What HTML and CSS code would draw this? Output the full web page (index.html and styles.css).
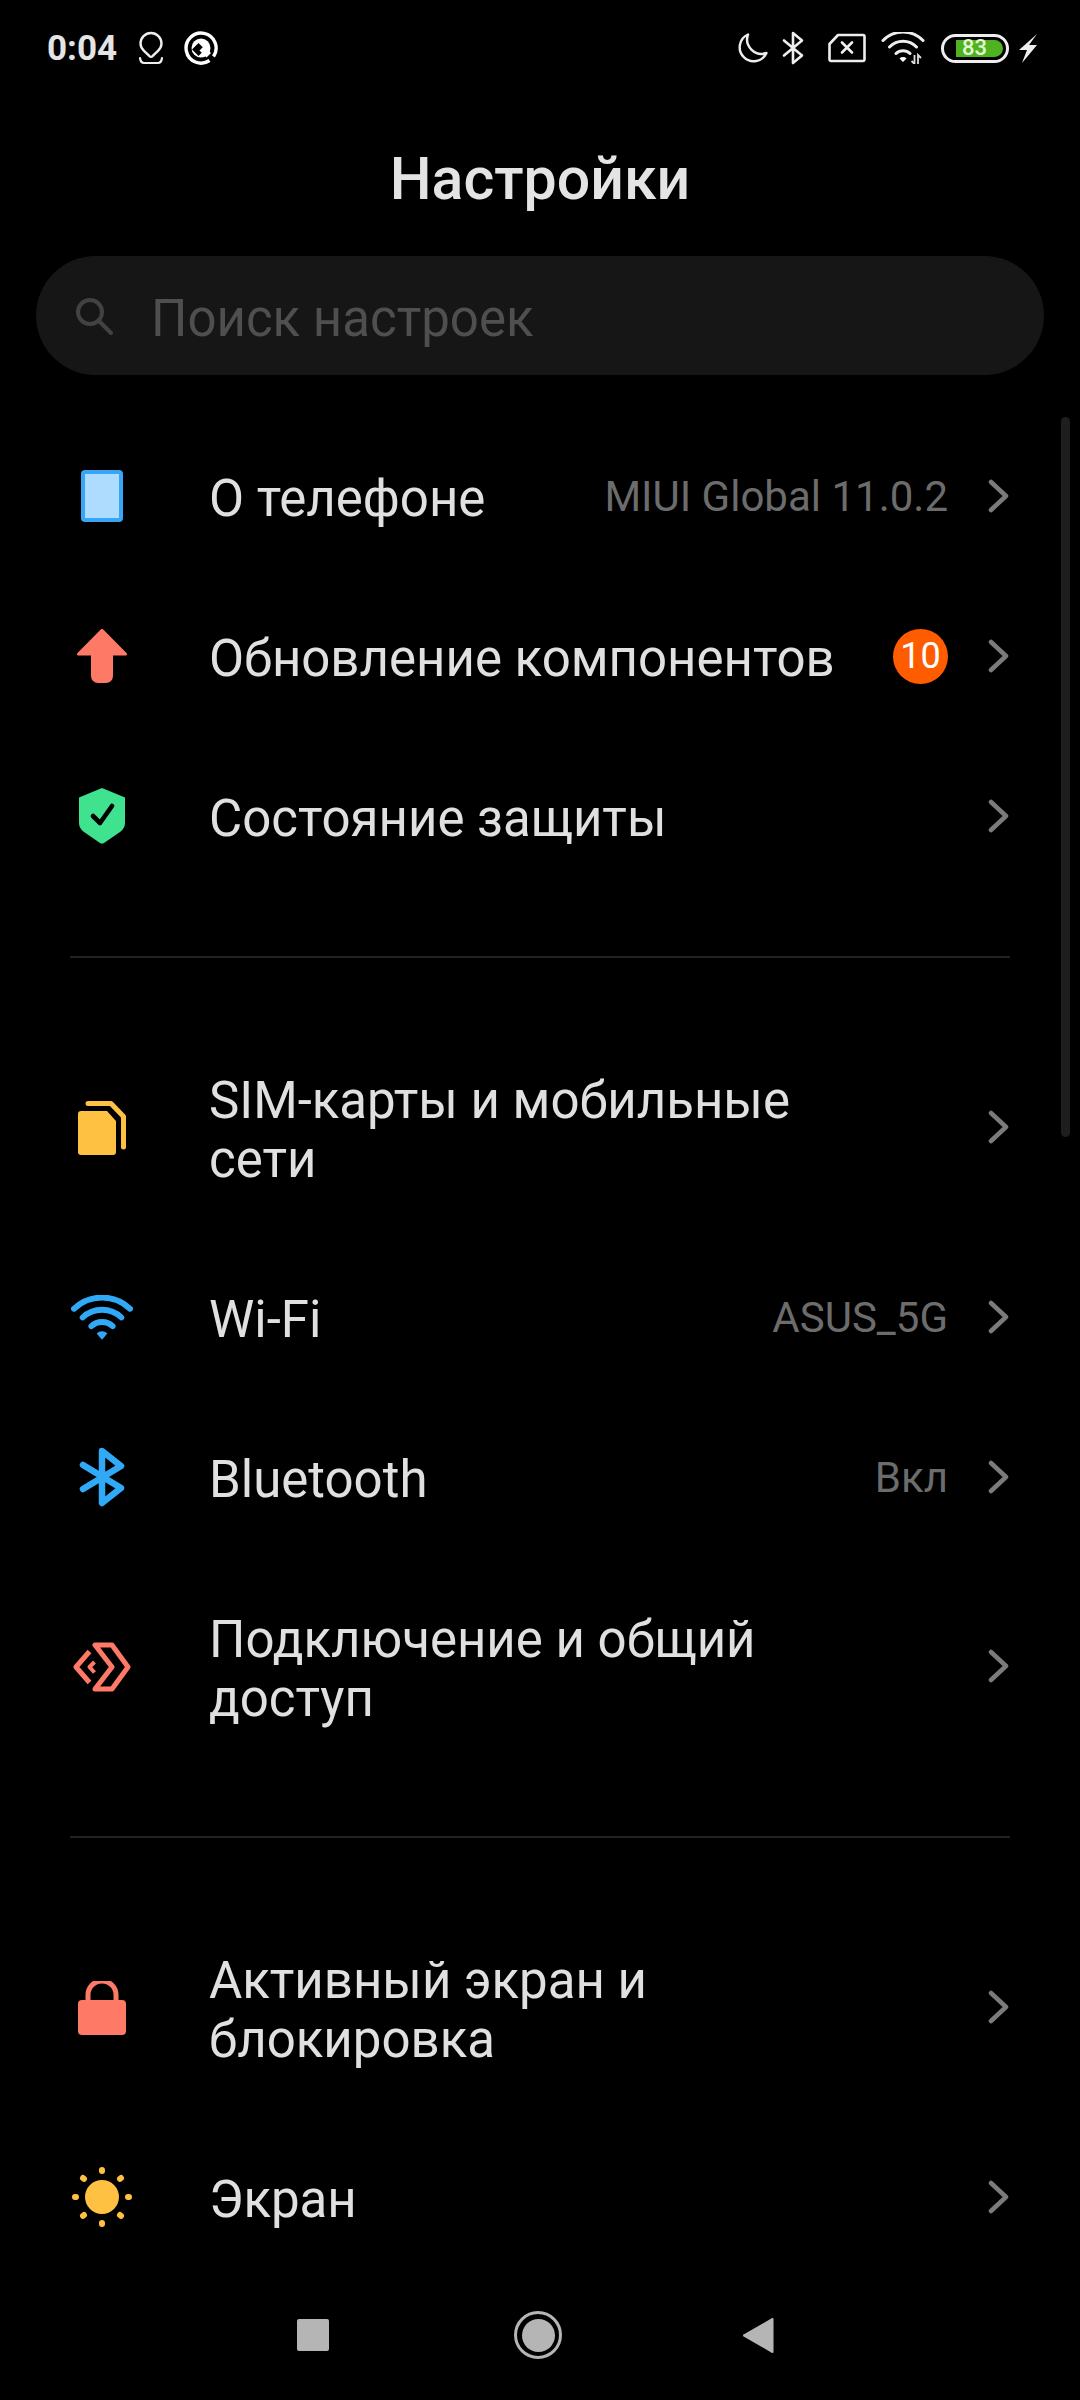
FILE: index.html
```html
<!DOCTYPE html>
<html lang="ru">
<head>
<meta charset="utf-8">
<title>Настройки</title>
<link rel="stylesheet" href="styles.css">
</head>
<body>
<div class="screen">
  <header class="status">
    <div class="status-left">
      <span class="time">0:04</span>
      <svg class="si-loc" viewBox="0 0 26 34" width="26" height="34"><path d="M13 2a10.500 10.500 0 0 1 10.500 10.500c0 3-1.500 5.300-3.500 7.300l-5.500 5.400a2 2 0 0 1-3 0L6 19.800c-2-2-3.500-4.300-3.500-7.300A10.500 10.500 0 0 1 13 2z" fill="none" stroke="#eee" stroke-width="2.400"/><path d="M2 27c.4 3 1.500 5 4 5h14c2.500 0 3.600-2 4-5" fill="none" stroke="#eee" stroke-width="2.200" stroke-linecap="round"/></svg>
      <svg class="si-q" viewBox="0 0 34 34" width="34" height="34"><path d="M25.500 29.500A15 15 0 1 1 29.500 25.500" fill="none" stroke="#fff" stroke-width="3.400"/><circle cx="17" cy="17" r="9.500" fill="#fff"/><path d="M8 18.500 14.500 12 21 18.500 14.500 25z" fill="#000"/><path d="M15.500 19.500 20 15l7 7-4.500 4.500z" fill="#fff"/></svg>
    </div>
    <div class="status-right">
      <svg class="sb-moon" viewBox="0 0 34 34" width="34" height="34"><path d="M13 3.500A14 14 0 1 0 31.500 22 14.500 14.500 0 0 1 13 3.500z" fill="none" stroke="#eee" stroke-width="2.400" stroke-linejoin="round"/></svg>
      <svg class="sb-bt" viewBox="0 0 22 34" width="22" height="34"><path d="M2 9.500 20 24.500 11 32V2l9 7.500L2 24.500" fill="none" stroke="#eee" stroke-width="2.600" stroke-linecap="round" stroke-linejoin="round"/></svg>
      <svg class="sb-sim" viewBox="0 0 38 30" width="38" height="30"><path d="M10 2h25a1.500 1.500 0 0 1 1.500 1.500v23A1.500 1.500 0 0 1 35 28H3a1.500 1.500 0 0 1-1.500-1.500V11z" fill="none" stroke="#eee" stroke-width="2.600" stroke-linejoin="round"/><path d="M14 9.500l10 10M24 9.500l-10 10" stroke="#eee" stroke-width="2.600" stroke-linecap="round"/></svg>
      <svg class="sb-wifi" viewBox="0 0 44 32" width="44" height="32"><path d="M2 8.500a28 28 0 0 1 40 0M8.500 15a19 19 0 0 1 27 0M15 21.500a10 10 0 0 1 14 0" fill="none" stroke="#eee" stroke-width="3" stroke-linecap="round"/><path d="M18.500 26.500a5 5 0 0 1 7 0L22 30z" fill="#fff"/><path d="M33.500 23v9l-3-3M37 32v-9l3 3" fill="none" stroke="#ddd" stroke-width="1.800"/></svg>
      <div class="battery"><div class="battery-fill"><span class="battery-num">83</span></div></div>
      <svg class="sb-bolt" viewBox="0 0 20 30" width="20" height="30"><path d="M19 1 1 17h8L4 30 19 12h-8z" fill="#eee"/></svg>
    </div>
  </header>

  <h1 class="title">Настройки</h1>

  <div class="search">
    <svg class="search-icon" viewBox="0 0 40 40" width="40" height="40"><circle cx="15" cy="15" r="12" fill="none" stroke="#424242" stroke-width="4"/><path d="M24 24l12 12" stroke="#424242" stroke-width="4" stroke-linecap="round"/></svg>
    <span class="search-text">Поиск настроек</span>
  </div>

  <div class="scrollbar"></div>

  <main class="list">
    <section class="group">
      <a class="row">
        <span class="icon"><span class="phone-icon"></span></span>
        <span class="label">О телефоне</span>
        <span class="value">MIUI Global 11.0.2</span>
        <svg class="chev" viewBox="0 0 22 34" width="22" height="34"><path d="M3 3l15 14L3 31" fill="none" stroke="#7b7b7b" stroke-width="4.500" stroke-linecap="round" stroke-linejoin="round"/></svg>
      </a>
      <a class="row">
        <span class="icon"><svg viewBox="0 0 50 54" width="50" height="54"><path d="M23.500.8.500 24c-1 1.200-.3 2.500 1 2.500H14V47a7 7 0 0 0 7 7h8a7 7 0 0 0 7-7V26.500h12.500c1.300 0 2-1.300 1-2.500L26.500.8a2 2 0 0 0-3 0z" fill="#ff7a66"/></svg></span>
        <span class="label">Обновление компонентов</span>
        <span class="badge">10</span>
        <svg class="chev" viewBox="0 0 22 34" width="22" height="34"><path d="M3 3l15 14L3 31" fill="none" stroke="#7b7b7b" stroke-width="4.500" stroke-linecap="round" stroke-linejoin="round"/></svg>
      </a>
      <a class="row">
        <span class="icon"><svg viewBox="0 0 46 56" width="46" height="56"><path d="M23 0 46 9.500V34c0 5-1.500 7-5 10L25 55c-1.200.8-2.800.8-4 0L5 44c-3.500-3-5-5-5-10V9.500z" fill="#3fe28f"/><path d="M14 28l7 7 12-17" fill="none" stroke="#000" stroke-width="4.600" stroke-linecap="round" stroke-linejoin="round"/></svg></span>
        <span class="label">Состояние защиты</span>
        <svg class="chev" viewBox="0 0 22 34" width="22" height="34"><path d="M3 3l15 14L3 31" fill="none" stroke="#7b7b7b" stroke-width="4.500" stroke-linecap="round" stroke-linejoin="round"/></svg>
      </a>
    </section>
    <hr class="divider">
    <section class="group">
      <a class="row row-tall">
        <span class="icon"><svg viewBox="0 0 48 54" width="48" height="54"><path d="M3 10h26l9 10v31a3 3 0 0 1-3 3H3a3 3 0 0 1-3-3V13a3 3 0 0 1 3-3z" fill="#ffc142"/><path d="M10 2.500h23l12.500 13V46" fill="none" stroke="#ffc142" stroke-width="5" stroke-linecap="round" stroke-linejoin="round"/></svg></span>
        <span class="label">SIM-карты и мобильные<br>сети</span>
        <svg class="chev" viewBox="0 0 22 34" width="22" height="34"><path d="M3 3l15 14L3 31" fill="none" stroke="#7b7b7b" stroke-width="4.500" stroke-linecap="round" stroke-linejoin="round"/></svg>
      </a>
      <a class="row">
        <span class="icon"><svg viewBox="0 0 64 46" width="62" height="45"><path d="M3 14a42 42 0 0 1 58 0M12 23a29 29 0 0 1 40 0M21 32a16 16 0 0 1 22 0" fill="none" stroke="#30a9f6" stroke-width="6" stroke-linecap="round"/><path d="M26.500 39.500a8 8 0 0 1 11 0L32 46z" fill="#30a9f6"/></svg></span>
        <span class="label">Wi-Fi</span>
        <span class="value">ASUS_5G</span>
        <svg class="chev" viewBox="0 0 22 34" width="22" height="34"><path d="M3 3l15 14L3 31" fill="none" stroke="#7b7b7b" stroke-width="4.500" stroke-linecap="round" stroke-linejoin="round"/></svg>
      </a>
      <a class="row">
        <span class="icon"><svg viewBox="0 0 46 60" width="46" height="60"><path d="M4 18 42 41 23 56V4L42 19 4 42" fill="none" stroke="#30a9f6" stroke-width="6.500" stroke-linecap="round" stroke-linejoin="round"/></svg></span>
        <span class="label">Bluetooth</span>
        <span class="value">Вкл</span>
        <svg class="chev" viewBox="0 0 22 34" width="22" height="34"><path d="M3 3l15 14L3 31" fill="none" stroke="#7b7b7b" stroke-width="4.500" stroke-linecap="round" stroke-linejoin="round"/></svg>
      </a>
      <a class="row row-tall">
        <span class="icon"><svg viewBox="0 0 58 50" width="58" height="50"><path d="M22 3H39L55 25 39 47H22L39 25z" fill="none" stroke="#ff7a66" stroke-width="5" stroke-linejoin="round"/><path d="M16.500 9.500 3 25l13.500 15.500" fill="none" stroke="#ff7a66" stroke-width="5" stroke-linejoin="round"/><path d="M21.500 20 16.500 25l5 5.500" fill="none" stroke="#ff7a66" stroke-width="4" stroke-linejoin="round"/></svg></span>
        <span class="label">Подключение и общий<br>доступ</span>
        <svg class="chev" viewBox="0 0 22 34" width="22" height="34"><path d="M3 3l15 14L3 31" fill="none" stroke="#7b7b7b" stroke-width="4.500" stroke-linecap="round" stroke-linejoin="round"/></svg>
      </a>
    </section>
    <hr class="divider">
    <section class="group">
      <a class="row row-tall">
        <span class="icon"><svg viewBox="0 0 48 54" width="48" height="54"><path d="M10 20v-6a14 14 0 0 1 28 0v6" fill="none" stroke="#ff7a66" stroke-width="5"/><rect x="0" y="19" width="48" height="35" rx="4" fill="#ff7a66"/></svg></span>
        <span class="label">Активный экран и<br>блокировка</span>
        <svg class="chev" viewBox="0 0 22 34" width="22" height="34"><path d="M3 3l15 14L3 31" fill="none" stroke="#7b7b7b" stroke-width="4.500" stroke-linecap="round" stroke-linejoin="round"/></svg>
      </a>
      <a class="row">
        <span class="icon"><svg viewBox="0 0 60 60" width="60" height="60"><circle cx="30" cy="30" r="17" fill="#ffc142"/><g stroke="#ffc142" stroke-width="6" stroke-linecap="round"><path d="M30 3v1M30 56v1M3 30h1M56 30h1M11 11l1 .8M48 48l1 .8M49 11l-1 .8M12 48l-1 .8"/></g></svg></span>
        <span class="label">Экран</span>
        <svg class="chev" viewBox="0 0 22 34" width="22" height="34"><path d="M3 3l15 14L3 31" fill="none" stroke="#7b7b7b" stroke-width="4.500" stroke-linecap="round" stroke-linejoin="round"/></svg>
      </a>
    </section>
  </main>

  <nav class="navbar">
    <span class="nav-square"></span>
    <span class="nav-home"><span class="nav-home-dot"></span></span>
    <svg class="nav-back" viewBox="0 0 32 38" width="31" height="37"><path d="M30 1 1.500 17.500a1.500 1.500 0 0 0 0 3L30 37a1.200 1.200 0 0 0 1.500-1V2A1.200 1.200 0 0 0 30 1z" fill="#b5b5b5"/></svg>
  </nav>
</div>
</body>
</html>
```
FILE: styles.css
```css
* { box-sizing: border-box; }
html, body { margin: 0; background: #000; }
.screen {
  position: relative;
  width: 1080px;
  height: 2400px;
  overflow: hidden;
  background: #000;
  color: #e6e6e6;
  font-family: Roboto, "Noto Sans", sans-serif;
}
.status {
  height: 96px;
  display: flex;
  justify-content: space-between;
  align-items: center;
  padding: 0 42px 0 47px;
}
.status-left, .status-right { display: flex; align-items: center; }
.time { font-size: 35px; font-weight: 700; color: #e4e4e4; }
.si-loc { margin-left: 21px; }
.si-q { margin-left: 20px; }
.sb-bt { margin-left: 13px; }
.sb-sim { margin-left: 24px; }
.sb-wifi { margin-left: 15px; }
.sb-bolt { margin-left: 9px; }
.battery {
  margin-left: 16px;
  width: 68px;
  height: 29px;
  border: 3px solid #eee;
  border-radius: 15px;
  padding: 3px;
  display: flex;
}
.battery-fill {
  width: 47px;
  margin-left: 9px;
  background: #4fb21f;
  border-radius: 0 10px 10px 0;
  display: flex;
  align-items: center;
}
.battery-num {
  font-size: 22px;
  font-weight: 500;
  line-height: 18px;
  color: #e4f7d4;
  margin-left: 6px;
}
.title {
  margin: 50px 0 0;
  height: 66px;
  line-height: 66px;
  text-align: center;
  font-size: 59px;
  font-weight: 500;
  color: #e4e4e4;
}
.search {
  margin: 44px 36px 0;
  height: 119px;
  border-radius: 60px;
  background: #161616;
  display: flex;
  align-items: center;
  padding-left: 39px;
}
.search-icon { margin-top: 2px; }
.search-text {
  margin-left: 36px;
  padding-top: 6px;
  font-size: 51px;
  color: #4f4f4f;
}
.scrollbar {
  position: absolute;
  left: 1061px;
  top: 417px;
  width: 9px;
  height: 720px;
  border-radius: 5px;
  background: #1e1e1e;
}
.list { margin-top: 41px; }
.row {
  height: 160px;
  display: flex;
  align-items: center;
  padding: 0 70px;
}
.row-tall { height: 219px; }
.icon {
  flex: none;
  width: 64px;
  display: flex;
  justify-content: center;
  align-items: center;
  margin-right: 75px;
}
.phone-icon {
  width: 42px;
  height: 52px;
  background: #aedcff;
  border: 4px solid #38a6f5;
  border-radius: 4px;
}
.label {
  flex: 1;
  padding-top: 5px;
  font-size: 51px;
  line-height: 59px;
  color: #e0e0e0;
}
.value {
  font-size: 42px;
  color: #6c6c6c;
  margin-right: 40px;
}
.badge {
  width: 55px;
  height: 55px;
  border-radius: 50%;
  background: #ff5c00;
  color: #fff;
  font-size: 36px;
  display: flex;
  align-items: center;
  justify-content: center;
  margin-right: 40px;
}
.chev { flex: none; margin-top: -1px; }
.divider {
  margin: 60px 70px;
  border: 0;
  height: 2px;
  background: #222;
}
.navbar {
  position: absolute;
  left: 0;
  right: 0;
  bottom: 0;
  height: 130px;
  display: flex;
  align-items: center;
  padding-left: 297px;
}
.nav-square {
  width: 32px;
  height: 32px;
  border-radius: 2px;
  background: #b5b5b5;
}
.nav-home {
  margin: 0 181px 0 185px;
  width: 48px;
  height: 48px;
  border-radius: 50%;
  border: 3px solid #b5b5b5;
  display: flex;
  align-items: center;
  justify-content: center;
}
.nav-home-dot {
  width: 33px;
  height: 33px;
  border-radius: 50%;
  background: #b5b5b5;
}
```
